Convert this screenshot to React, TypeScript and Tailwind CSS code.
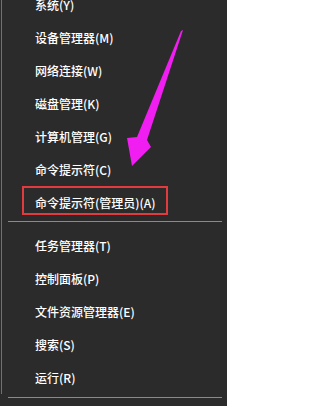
import React from "react";

const group1 = [
  "系统(Y)",
  "设备管理器(M)",
  "网络连接(W)",
  "磁盘管理(K)",
  "计算机管理(G)",
  "命令提示符(C)",
];
const group2 = ["任务管理器(T)", "控制面板(P)", "文件资源管理器(E)", "搜索(S)", "运行(R)"];

function Row({ label, boxed }: { label: string; boxed?: boolean }) {
  return (
    <div className="relative h-[33px] flex items-center pl-[33px] text-[12px] font-medium leading-none text-white whitespace-nowrap">
      {label}
      {boxed && (
        <div className="absolute left-[20px] top-0 w-[146px] h-[29px] border-[2.5px] border-[#e23b3f]" />
      )}
    </div>
  );
}

export default function App() {
  return (
    <div
      className="relative w-[227px] h-[406px] overflow-hidden bg-[#2b2b2b]"
      style={{ fontFamily: '"Noto Sans CJK SC", "Noto Sans", sans-serif' }}
    >
      <div className="ml-[1px] h-full border-l border-[#707070]">
        <div className="-mt-[12px] flex flex-col">
          {group1.map((l) => (
            <Row key={l} label={l} />
          ))}
          <Row label="命令提示符(管理员)(A)" boxed />
          <div className="pt-[2px] h-[10px]">
            <div className="ml-[6px] mr-[5px] h-px bg-[#8a8a8a]" />
          </div>
          {group2.map((l) => (
            <Row key={l} label={l} />
          ))}
          <div className="pt-[3px] h-[10px]">
            <div className="ml-[6px] mr-[5px] h-px bg-[#8a8a8a]" />
          </div>
        </div>
      </div>
      <svg
        className="absolute left-0 top-0 pointer-events-none"
        width="227"
        height="406"
        viewBox="0 0 227 406"
      >
        <polygon
          points="183,30 147,140 151,147 132,166 127,138 137,137 181,31"
          fill="#f01ef0"
        />
      </svg>
    </div>
  );
}
